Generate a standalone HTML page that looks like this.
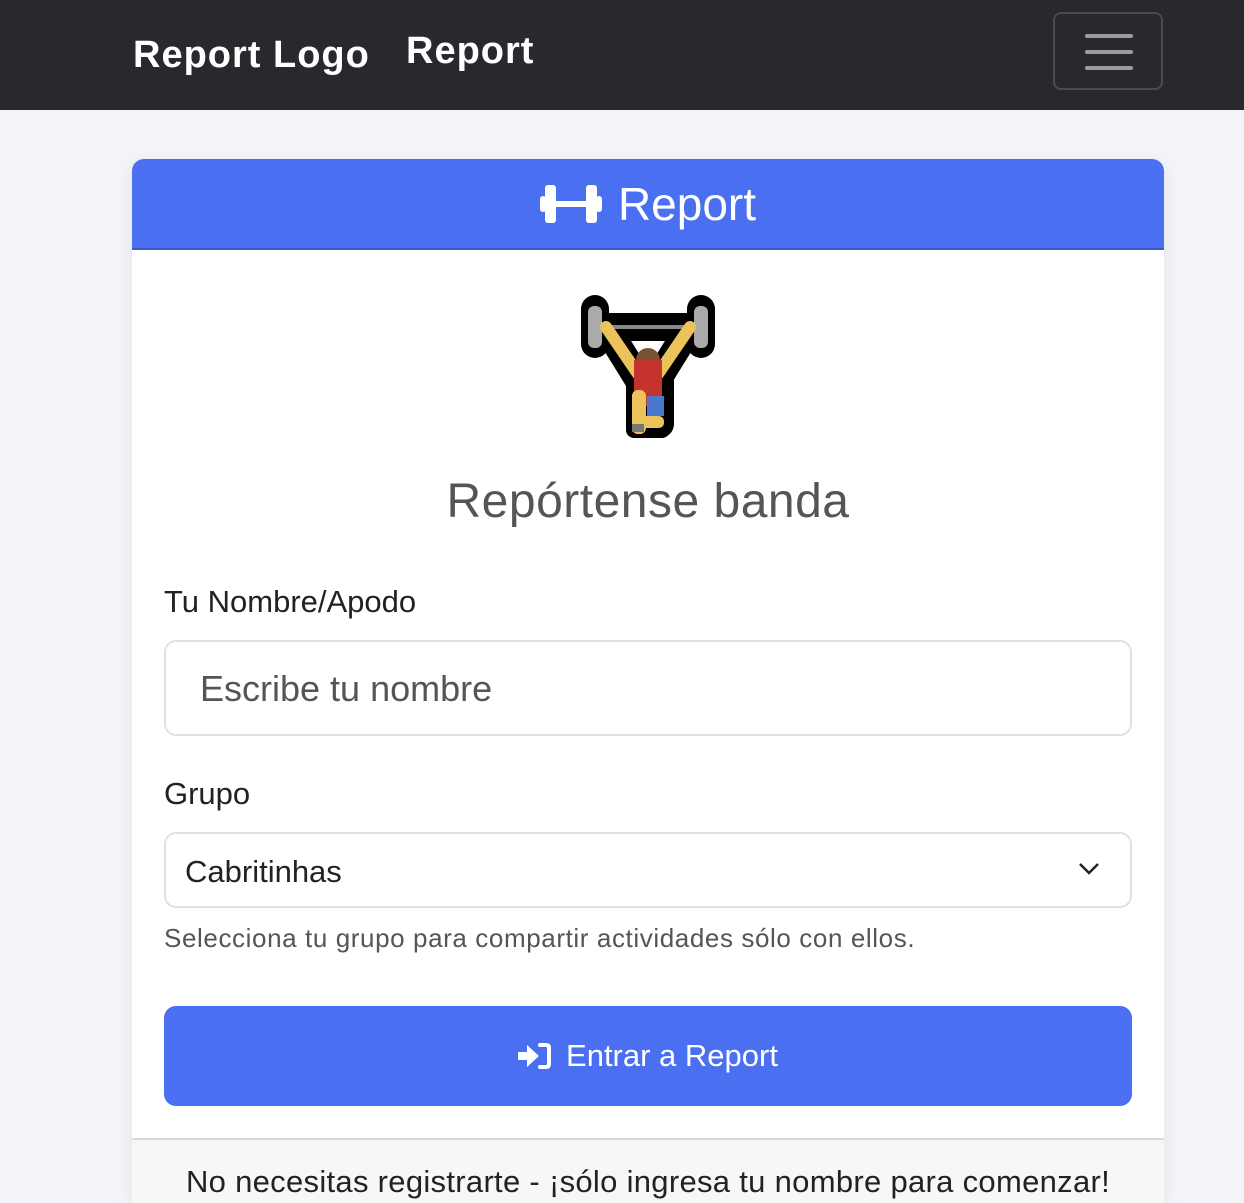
<!DOCTYPE html>
<html><head><meta charset="utf-8"><style>
*{box-sizing:border-box;margin:0;padding:0}
html,body{width:1244px;height:1203px;overflow:hidden}
body{background:#f3f5fa;font-family:"Liberation Sans",sans-serif;position:relative}
.nav{position:absolute;left:0;top:0;width:1244px;height:110px;background:#27292e}
.brand{position:absolute;color:#fff;font-weight:bold;font-size:38px;top:34px;letter-spacing:1px}
.tog{position:absolute;left:1053px;top:12px;width:110px;height:78px;border:2px solid #4a4c52;border-radius:8px}
.tog i{position:absolute;left:30px;width:48px;height:4px;background:#9a9ca0;border-radius:2px}
.card{position:absolute;left:132px;top:159px;width:1032px;height:1044px;background:#fff;border-radius:12px 12px 0 0;overflow:hidden;box-shadow:0 4px 20px rgba(0,0,0,.08)}
.hdr{height:91px;background:#4a6ff0;border-bottom:2px solid #3d5bcc;color:#fff;font-size:46px;display:flex;align-items:center;justify-content:center;gap:16px}
.title{position:absolute;top:315px;width:100%;text-align:center;font-size:48px;color:#555;letter-spacing:.5px}
.lbl{position:absolute;left:32px;font-size:31px;color:#222}
.inp{position:absolute;left:32px;width:968px;border:2px solid #dee2e6;border-radius:12px;font-size:36px;color:#555}
.help{position:absolute;left:32px;top:764px;font-size:26px;color:#555;letter-spacing:.6px}
.btn{position:absolute;left:32px;top:847px;width:968px;height:100px;background:#4a6ff0;border-radius:12px;color:#fff;font-size:31px;display:flex;align-items:center;justify-content:center;gap:14px}
.foot{position:absolute;left:0;top:979px;width:100%;height:100px;background:#f7f7f7;border-top:2px solid #d8d8d8;text-align:center;font-size:31px;color:#222;padding-top:24px;letter-spacing:.3px}
</style></head><body>
<div class="nav">
<div class="brand" style="left:133px">Report Logo</div>
<div class="brand" style="left:406px;top:30px">Report</div>
<div class="tog"><i style="top:20px"></i><i style="top:36px"></i><i style="top:52px"></i></div>
</div>
<div class="card">
<div class="hdr"><svg width="62" height="44" viewBox="0 0 62 44"><g fill="#fff"><rect x="0" y="14" width="6" height="16" rx="3"/><rect x="5" y="3" width="11" height="38" rx="3"/><rect x="16" y="19" width="30" height="6"/><rect x="46" y="3" width="11" height="38" rx="3"/><rect x="56" y="14" width="6" height="16" rx="3"/></g></svg><span>Report</span></div>
<svg style="position:absolute;left:446px;top:135px" width="140" height="145" viewBox="0 0 140 145">
<g stroke="#000" stroke-width="28" stroke-linecap="round" stroke-linejoin="round" fill="none">
<path d="M17 15 V50 M123 15 V50 M17 33 H123 M28 33 L62 88 M112 33 L78 88 M62 88 V130 H82 V88"/>
</g>
<rect x="48" y="80" width="44" height="64" rx="8" fill="#000"/>
<rect x="10" y="12" width="14" height="42" rx="6" fill="#aaa"/><rect x="116" y="12" width="14" height="42" rx="6" fill="#aaa"/>
<rect x="24" y="31" width="92" height="4" fill="#888"/>
<path d="M28 33 L60 80 M112 33 L80 80" stroke="#ecc35a" stroke-width="12" stroke-linecap="round"/>
<circle cx="70" cy="66" r="12" fill="#7a5232"/>
<rect x="56" y="66" width="28" height="46" fill="#c5332f"/>
<rect x="69" y="102" width="17" height="20" fill="#4a78cc"/>
<rect x="54" y="96" width="14" height="44" rx="6" fill="#ecc35a"/>
<rect x="58" y="122" width="28" height="12" rx="5" fill="#ecc35a"/>
<rect x="54" y="130" width="12" height="8" fill="#777"/>
</svg>
<div class="title">Repórtense banda</div>
<div class="lbl" style="top:425px">Tu Nombre/Apodo</div>
<div class="inp" style="top:481px;height:96px;padding:26px 0 0 34px">Escribe tu nombre</div>
<div class="lbl" style="top:617px">Grupo</div>
<div class="inp" style="top:673px;height:76px;padding:20px 0 0 19px;font-size:31px;color:#222">Cabritinhas
<svg style="position:absolute;right:30px;top:28px" width="22" height="14" viewBox="0 0 22 14"><path d="M2 2 L11 11 L20 2" fill="none" stroke="#222" stroke-width="2.5"/></svg></div>
<div class="help">Selecciona tu grupo para compartir actividades sólo con ellos.</div>
<div class="btn"><svg width="34" height="28" viewBox="0 0 34 28"><path d="M0 10 H9 V3 L21 14 L9 25 V18 H0 Z" fill="#fff"/><path d="M22 3 H28 Q31 3 31 6 V22 Q31 25 28 25 H22" fill="none" stroke="#fff" stroke-width="4" stroke-linecap="round"/></svg><span>Entrar a Report</span></div>
<div class="foot">No necesitas registrarte - ¡sólo ingresa tu nombre para comenzar!</div>
</div>
</body></html>
